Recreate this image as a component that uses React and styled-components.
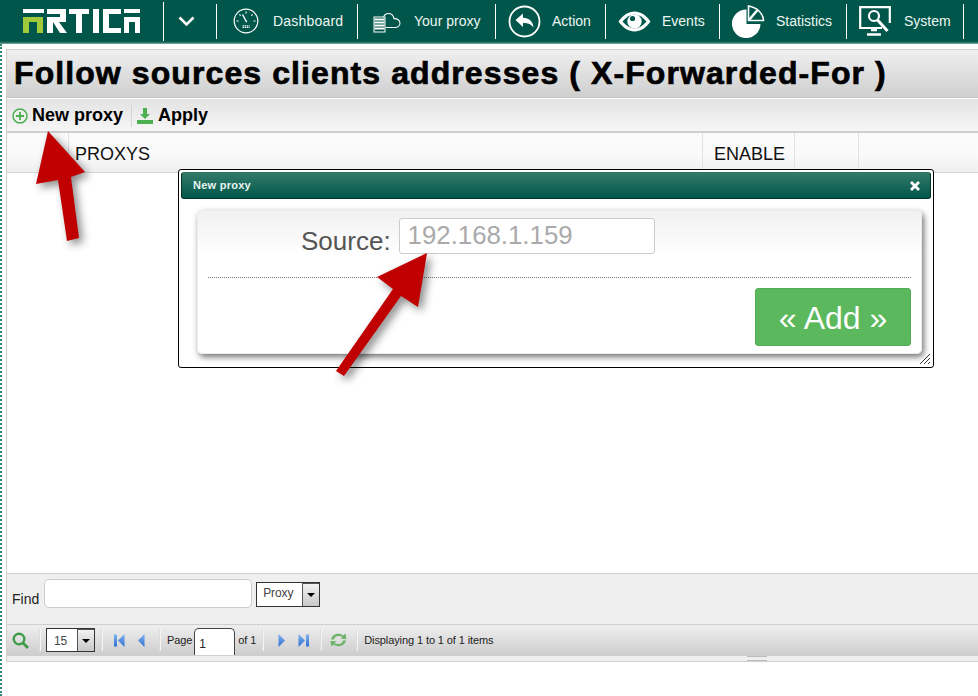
import React from "react";
import styled, { createGlobalStyle } from "styled-components";

const Global = createGlobalStyle`
  html, body { margin: 0; padding: 0; background: #fff; overflow: hidden; }
  body { font-family: "Liberation Sans", Arial, sans-serif; }
  * { box-sizing: border-box; }
`;

const Page = styled.div`
  position: relative;
  width: 978px;
  height: 696px;
  overflow: hidden;
  display: flex;
  flex-direction: column;
`;

const Header = styled.header`
  height: 44px;
  flex: none;
  display: flex;
  align-items: center;
  padding-bottom: 2px;
  background: linear-gradient(to bottom, #00564a 0, #00564a 41px, #3f8072 43px, #9cbcb4 44px);
`;

const Logo = styled.div`
  width: 164px;
  height: 39px;
  margin-top: 1px;
  padding-left: 23px;
  display: flex;
  align-items: center;
  border-right: 1px solid #fff;
`;

const Chevron = styled.div`
  width: 53px;
  height: 35px;
  padding-right: 8px;
  display: flex;
  align-items: center;
  justify-content: center;
  border-right: 1px solid #fff;
`;

const NavItem = styled.div`
  width: ${(p) => p.$w}px;
  height: 35px;
  flex: none;
  display: flex;
  align-items: center;
  border-right: 1px solid #fff;
  padding-left: ${(p) => p.$pad}px;
`;

const NavIcon = styled.span`
  display: flex;
  width: ${(p) => p.$w}px;
  flex: none;
`;

const NavLabel = styled.span`
  color: #eef6f4;
  font-size: 14px;
  white-space: nowrap;
  letter-spacing: ${(p) => p.$ls || 0}px;
`;

const Main = styled.div`
  flex: 1;
  display: flex;
  flex-direction: column;
  border-left: 2px dotted #2f8a78;
  padding: 5px 0 34px 4px;
`;

const Grid = styled.div`
  width: 1500px;
  flex: 1;
  display: flex;
  flex-direction: column;
  border: 1px solid #d0d0d0;
  border-right: none;
`;

const TitleBar = styled.div`
  height: 48px;
  flex: none;
  padding-left: 7px;
  display: flex;
  align-items: center;
  border-bottom: 1px solid #c8c8c8;
  background: linear-gradient(to bottom, #efefef, #cfcfcf);
`;

const Title = styled.h1`
  margin: 0;
  font-size: 32px;
  font-weight: 700;
  letter-spacing: 1.09px;
  color: #000;
  white-space: nowrap;
  -webkit-text-stroke: 0.7px #000;
`;

const Toolbar = styled.div`
  height: 35px;
  flex: none;
  display: flex;
  align-items: center;
  padding: 1px 0 0 5px;
  border-top: 1px solid #fff;
  border-bottom: 2px solid #cfcfcf;
  background: linear-gradient(to bottom, #e3e3e3, #f6f6f6);
`;

const ToolButton = styled.div`
  display: flex;
  align-items: center;
  gap: ${(p) => p.$gap}px;
  height: 22px;
  padding-right: 4px;
  font-size: 18px;
  font-weight: 700;
  color: #000;
  & + & {
    border-left: 1px solid #d4d4d4;
    padding-left: 5px;
    margin-left: 4px;
  }
`;

const HeadRow = styled.div`
  height: 40px;
  flex: none;
  display: flex;
  border-bottom: 1px solid #d8d8d8;
  background: linear-gradient(to bottom, #fbfbfb 0, #fafafa 55%, #efefef 100%);
`;

const HeadCell = styled.div`
  width: ${(p) => p.$w}px;
  flex: ${(p) => (p.$grow ? 1 : "none")};
  padding-left: ${(p) => p.$pad || 0}px;
  padding-top: 3px;
  display: flex;
  align-items: center;
  font-size: 18px;
  color: #111;
  border-right: ${(p) => (p.$grow ? "none" : "1px solid #e2e2e2")};
`;

const Body = styled.div`
  flex: 1;
  background: #fff;
`;

const FindBar = styled.div`
  height: 52px;
  flex: none;
  display: flex;
  align-items: flex-start;
  padding: 5px 0 0 5px;
  border-top: 1px solid #cfcfcf;
  border-bottom: 1px solid #cfcfcf;
  background: #efefef;
`;

const FindLabel = styled.span`
  font-size: 14px;
  color: #222;
  margin-top: 12px;
  margin-right: 5px;
`;

const FindInput = styled.div`
  width: 208px;
  height: 29px;
  background: #fff;
  border: 1px solid #ccc;
  border-radius: 5px;
`;

const SelectBox = styled.div`
  width: ${(p) => p.$w}px;
  height: ${(p) => p.$h}px;
  flex: none;
  margin-left: ${(p) => p.$ml}px;
  margin-top: ${(p) => p.$mt}px;
  display: flex;
  background: #fff;
  border: 1px solid #333;
`;

const SelectText = styled.span`
  flex: 1;
  padding-right: 3px;
  text-align: center;
  line-height: ${(p) => p.$lh}px;
  font-size: 12px;
  letter-spacing: -0.1px;
  color: #444;
`;

const SelectArrow = styled.span`
  width: 17px;
  flex: none;
  display: flex;
  align-items: center;
  justify-content: center;
  border-left: 1px solid #555;
  border-top: 1px solid #555;
  background: linear-gradient(to bottom, #f2f2f2, #c8c8c8);
  &::after {
    content: "";
    border-left: 4px solid transparent;
    border-right: 4px solid transparent;
    border-top: 4px solid #000;
  }
`;

const Pager = styled.div`
  height: 31px;
  flex: none;
  display: flex;
  align-items: center;
  padding-left: 5px;
  border-bottom: 1px solid #cfcfcf;
  background: linear-gradient(to bottom, #efefef, #cdcdcd);
`;

const PagerSep = styled.span`
  width: 1px;
  height: 22px;
  flex: none;
  margin: 0 ${(p) => p.$r ?? 6}px 0 ${(p) => p.$l ?? 6}px;
  background: #dcdcdc;
  box-shadow: 1px 0 0 #f4f4f4;
`;

const PagerIcon = styled.span`
  display: flex;
  flex: none;
  margin-left: ${(p) => p.$ml || 0}px;
`;

const PagerText = styled.span`
  font-size: 11px;
  letter-spacing: -0.1px;
  color: #222;
  white-space: nowrap;
`;

const PageInput = styled.div`
  width: 41px;
  height: 27px;
  flex: none;
  margin: 3px 3px 0 2px;
  align-self: flex-start;
  background: #fff;
  border: 1px solid #444;
  border-bottom: none;
  border-radius: 5px 5px 0 0;
  padding: 8px 0 0 4px;
  font-size: 12px;
  color: #222;
`;

const Footer = styled.div`
  height: 5px;
  flex: none;
  display: flex;
  justify-content: center;
  align-items: center;
  background: #efefef;
  &::after {
    content: "";
    width: 20px;
    height: 3px;
    border-top: 1px solid #bbb;
    border-bottom: 1px solid #bbb;
  }
`;

const Modal = styled.div`
  position: absolute;
  left: 178px;
  top: 169px;
  width: 756px;
  height: 199px;
  background: #fff;
  border: 1px solid #000;
  border-radius: 3px;
  padding: 2px;
`;

const ModalBar = styled.div`
  height: 27px;
  padding: 0 11px 2px;
  display: flex;
  align-items: center;
  justify-content: space-between;
  border: 1px solid #00342c;
  border-top-color: #2e7565;
  border-radius: 3px;
  background: linear-gradient(to bottom, #337a6a, #00564a);
  font-size: 11px;
  font-weight: 700;
  letter-spacing: 0.25px;
  color: #e8f4f0;
`;

const Close = styled.span`
  display: flex;
  margin-right: -1px;
  margin-bottom: -2px;
`;

const Card = styled.div`
  margin: 11px 9px 0 16px;
  height: 144px;
  background: linear-gradient(to bottom, #f1f1f1 0, #fff 45px);
  border: 1px solid #ececec;
  border-radius: 5px;
  box-shadow: 2px 3px 6px rgba(0, 0, 0, 0.55);
  padding: 7px 10px 0;
`;

const FormRow = styled.div`
  display: flex;
  height: 60px;
  padding-left: 93px;
  border-bottom: 1px dotted #777;
`;

const SourceLabel = styled.span`
  font-size: 26px;
  color: #555;
  margin-top: 8px;
  margin-right: 8px;
`;

const SourceInput = styled.div`
  width: 256px;
  height: 36px;
  border: 1px solid #ccc;
  border-radius: 3px;
  background: #fff;
  padding-left: 8px;
  font-size: 25.8px;
  line-height: 33px;
  color: #aaa;
`;

const ButtonRow = styled.div`
  display: flex;
  justify-content: flex-end;
  padding-top: 10px;
`;

const AddButton = styled.div`
  width: 156px;
  height: 58px;
  padding-top: 3px;
  background: #5cb85c;
  border: 1px solid #54ad54;
  border-radius: 3px;
  display: flex;
  align-items: center;
  justify-content: center;
  font-size: 32px;
  color: #fff;
`;

const Grip = styled.svg`
  position: absolute;
  right: 2px;
  bottom: 2px;
`;

const Arrow = styled.svg`
  position: absolute;
  left: 0;
  top: 0;
  pointer-events: none;
  filter: drop-shadow(4px 4px 4px rgba(0, 0, 0, 0.45));
`;

const Gauge = () => (
  <svg width="26" height="26" viewBox="0 0 26 26" fill="none" stroke="#fff">
    <circle cx="13" cy="13" r="11.8" strokeWidth="1.2" />
    <path d="M13 3.5v2M6.3 6.3l1.4 1.4M19.7 6.3l-1.4 1.4M3.5 13h2M22.5 13h-2" strokeWidth="1.1" />
    <path d="M9.5 6.5l4.2 7.6" strokeWidth="1.4" />
    <path d="M9.6 19.5h7M9.6 17.8h7" strokeWidth="1.2" strokeDasharray="1.4 .6" />
  </svg>
);

const CloudServer = () => (
  <svg width="28" height="24" viewBox="0 0 28 24" fill="none" stroke="#fff">
    <path d="M10 9.5c.8-3 2.8-5 5.5-5 3 0 5 2.200 5.600 5.200 3-.3 5.900 1.500 5.900 4.300 0 2.800-2.500 4.500-5 4.500H13" strokeWidth="1.1" />
    <rect x="1" y="8" width="11" height="15" fill="#00564a" strokeWidth="1" />
    <path d="M1.500 10.500h10M1.500 13.500h10M1.500 16.500h10M1.500 19.500h10" strokeWidth="2" />
  </svg>
);

const ActionIcon = () => (
  <svg width="33" height="33" viewBox="0 0 33 33" fill="none">
    <circle cx="16.500" cy="16.500" r="15" stroke="#fff" strokeWidth="1.800" />
    <path d="M7.500 15l7.500-6.500v4.200c6 .2 10 3.300 10.500 9.800-2.500-3.300-5.500-4.700-10.500-4.500v4z" fill="#fff" />
  </svg>
);

const EyeIcon = () => (
  <svg width="33" height="21" viewBox="0 0 33 21">
    <path fill="#fff" d="M.5 10.500C5 4 10.500 .5 16.500 .5S28 4 32.500 10.500C28 17 22.500 20.500 16.500 20.500S5 17 .5 10.500z" />
    <path fill="#00564a" d="M4.500 10.500C8.500 6 12.500 3.500 16.500 3.500S24.500 6 28.500 10.500C24.500 15 20.500 17.500 16.500 17.500S8.500 15 4.500 10.500z" />
    <circle cx="16.500" cy="10.500" r="7.200" fill="#fff" />
    <circle cx="14.500" cy="7.500" r="2.600" fill="#00564a" />
  </svg>
);

const PieIcon = () => (
  <svg width="33" height="33" viewBox="0 0 33 33">
    <path d="M14.500 4.500v14.500h14A14.300 14.300 0 1 1 14.500 4.500z" fill="#fff" />
    <path d="M16.500 1v14.500h15C31 8 25 2.500 16.500 1z" fill="none" stroke="#fff" strokeWidth="1.600" />
    <path d="M17 15L25.500 5" stroke="#fff" strokeWidth="2.500" />
  </svg>
);

const MonitorIcon = () => (
  <svg width="33" height="30" viewBox="0 0 33 30" fill="none" stroke="#fff">
    <path d="M23 22H1.200V1.200h29.600V17" strokeWidth="2.200" />
    <circle cx="15" cy="10" r="5" strokeWidth="2.200" />
    <path d="M18.500 14l10 11" strokeWidth="3" />
    <path d="M8 28.500h14M12 24h6" strokeWidth="2.400" />
  </svg>
);

const Brand = () => (
  <svg width="117" height="25" viewBox="0 0 117 25" fill="#fff">
    <rect x="0" y="0" width="21" height="4" />
    <path d="M0 8h20v16h-6V13H6v11H0z" fill="#a2c93a" />
    <path d="M24 0h19v13H36l8 11h-7l-7-11v11h-6V8h13V5H24z" />
    <path d="M46 0h20v5h-7v19h-6V5h-7z" />
    <rect x="70" y="0" width="6" height="24" />
    <path d="M80 0h18v5H86v14h12v5H80z" />
    <rect x="101" y="0" width="16" height="4" />
    <path d="M101 8h16v16h-5V13h-6v11h-5z" />
  </svg>
);

const Tri = ({ dir, bar }) => (
  <svg width={bar ? 11 : 8} height="13" viewBox={bar ? "0 0 11 13" : "0 0 8 13"}>
    <defs>
      <linearGradient id="blueFill" x1="0" y1="0" x2="0" y2="1">
        <stop offset="0" stopColor="#7fb2ef" />
        <stop offset="1" stopColor="#2f6fd0" />
      </linearGradient>
    </defs>
    {bar ? (
      dir === "left" ? (
        <>
          <rect x="0" y="0.500" width="3" height="12" fill="url(#blueFill)" />
          <path d="M10.500 0v13L4 6.500z" fill="url(#blueFill)" />
        </>
      ) : (
        <>
          <rect x="8" y="0.500" width="3" height="12" fill="url(#blueFill)" />
          <path d="M.5 0v13L7 6.500z" fill="url(#blueFill)" />
        </>
      )
    ) : dir === "left" ? (
      <path d="M7.500 0v13L1 6.500z" fill="url(#blueFill)" />
    ) : (
      <path d="M.5 0v13L7 6.500z" fill="url(#blueFill)" />
    )}
  </svg>
);

const Refresh = () => (
  <svg width="17" height="14" viewBox="0 0 17 14" fill="#6db36a">
    <path d="M1 6.500C2 2.500 5 .8 8.500 .8c2 0 3.500.6 4.500 1.700L15.500 .5l1 5.500-6-.3 2-1.700C11.500 3.200 10 2.800 8.500 2.900 6 3 4.500 4.200 4 6.500z" />
    <path d="M16 7.500c-1 4-4 5.700-7.500 5.700-2 0-3.500-.6-4.500-1.700L1.500 13.500l-1-5.500 6 .3-2 1.700c1 .8 2.500 1.200 4 1.100 2.500-.1 4-1.300 4.500-3.600z" />
  </svg>
);

const Magnifier = () => (
  <svg width="17" height="17" viewBox="0 0 17 17" fill="none" stroke="#3f9a4a">
    <circle cx="7" cy="7" r="5.300" strokeWidth="2.400" />
    <path d="M11 11l5 5" strokeWidth="2.800" />
  </svg>
);

const App = () => (
  <Page>
    <Global />
    <Header>
      <Logo><Brand /></Logo>
      <Chevron>
        <svg width="17" height="11" viewBox="0 0 17 11" fill="none" stroke="#fff" strokeWidth="2.600">
          <path d="M1.500 1.500L8.500 8.500L15.500 1.500" />
        </svg>
      </Chevron>
      <NavItem $w={141} $pad={16}>
        <NavIcon $w={40}><Gauge /></NavIcon>
        <NavLabel $ls={0.2}>Dashboard</NavLabel>
      </NavItem>
      <NavItem $w={138} $pad={15}>
        <NavIcon $w={41}><CloudServer /></NavIcon>
        <NavLabel>Your proxy</NavLabel>
      </NavItem>
      <NavItem $w={110} $pad={12}>
        <NavIcon $w={44}><ActionIcon /></NavIcon>
        <NavLabel>Action</NavLabel>
      </NavItem>
      <NavItem $w={114} $pad={12}>
        <NavIcon $w={44}><EyeIcon /></NavIcon>
        <NavLabel>Events</NavLabel>
      </NavItem>
      <NavItem $w={127} $pad={12}>
        <NavIcon $w={44}><PieIcon /></NavIcon>
        <NavLabel>Statistics</NavLabel>
      </NavItem>
      <NavItem $w={117} $pad={12}>
        <NavIcon $w={45}><MonitorIcon /></NavIcon>
        <NavLabel>System</NavLabel>
      </NavItem>
    </Header>
    <Main>
      <Grid>
        <TitleBar>
          <Title>Follow sources clients addresses ( X-Forwarded-For )</Title>
        </TitleBar>
        <Toolbar>
          <ToolButton $gap={4}>
            <svg width="16" height="16" viewBox="0 0 16 16" fill="none" stroke="#4caf50">
              <circle cx="8" cy="8" r="7" strokeWidth="1.500" />
              <path d="M8 4v8M4 8h8" strokeWidth="1.800" />
            </svg>
            New proxy
          </ToolButton>
          <ToolButton $gap={5}>
            <svg width="16" height="16" viewBox="0 0 16 16" fill="#4caf50">
              <path d="M6 0h4v6h3l-5 5-5-5h3z" />
              <rect x="0" y="12" width="16" height="4" />
            </svg>
            Apply
          </ToolButton>
        </Toolbar>
        <HeadRow>
          <HeadCell $w={62} />
          <HeadCell $w={634} $pad={6}>PROXYS</HeadCell>
          <HeadCell $w={92} $pad={11}>ENABLE</HeadCell>
          <HeadCell $w={64} />
          <HeadCell $grow />
        </HeadRow>
        <Body />
        <FindBar>
          <FindLabel>Find</FindLabel>
          <FindInput />
          <SelectBox $w={64} $h={25} $ml={4} $mt={3}>
            <SelectText $lh={20}>Proxy</SelectText>
            <SelectArrow />
          </SelectBox>
        </FindBar>
        <Pager>
          <PagerIcon><Magnifier /></PagerIcon>
          <PagerSep $l={10} $r={6} />
          <SelectBox $w={49} $h={24} $ml={0} $mt={0}>
            <SelectText $lh={24}>15</SelectText>
            <SelectArrow />
          </SelectBox>
          <PagerSep />
          <PagerIcon $ml={6}><Tri dir="left" bar /></PagerIcon>
          <PagerIcon $ml={12}><Tri dir="left" /></PagerIcon>
          <PagerSep $l={14} $r={7} />
          <PagerText>Page</PagerText>
          <PageInput>1</PageInput>
          <PagerText>of 1</PagerText>
          <PagerSep />
          <PagerIcon $ml={9}><Tri dir="right" /></PagerIcon>
          <PagerIcon $ml={12}><Tri dir="right" bar /></PagerIcon>
          <PagerSep $l={11} $r={9} />
          <PagerIcon><Refresh /></PagerIcon>
          <PagerSep $l={9} $r={7} />
          <PagerText>Displaying 1 to 1 of 1 items</PagerText>
        </Pager>
        <Footer />
      </Grid>
    </Main>
    <Modal>
      <ModalBar>
        New proxy
        <Close>
          <svg width="10" height="10" viewBox="0 0 10 10" stroke="#fff" strokeWidth="2.800">
            <path d="M1 1l8 8M9 1l-8 8" />
          </svg>
        </Close>
      </ModalBar>
      <Card>
        <FormRow>
          <SourceLabel>Source:</SourceLabel>
          <SourceInput>192.168.1.159</SourceInput>
        </FormRow>
        <ButtonRow>
          <AddButton>« Add »</AddButton>
        </ButtonRow>
      </Card>
      <Grip width="12" height="12" viewBox="0 0 12 12" stroke="#333" strokeWidth="1">
        <path d="M1 11L11 1M5 11L11 5M9 11L11 9" />
      </Grip>
    </Modal>
    <Arrow width="978" height="696" viewBox="0 0 978 696">
      <path d="M48 131L85 172L71 177L79 238L67 241L58 180L36 184Z" fill="#c00000" />
    </Arrow>
    <Arrow width="978" height="696" viewBox="0 0 978 696">
      <path d="M427 253L418 307L401 296L344 376L336 371L393 289L377 277Z" fill="#c00000" />
    </Arrow>
  </Page>
);

export default App;
